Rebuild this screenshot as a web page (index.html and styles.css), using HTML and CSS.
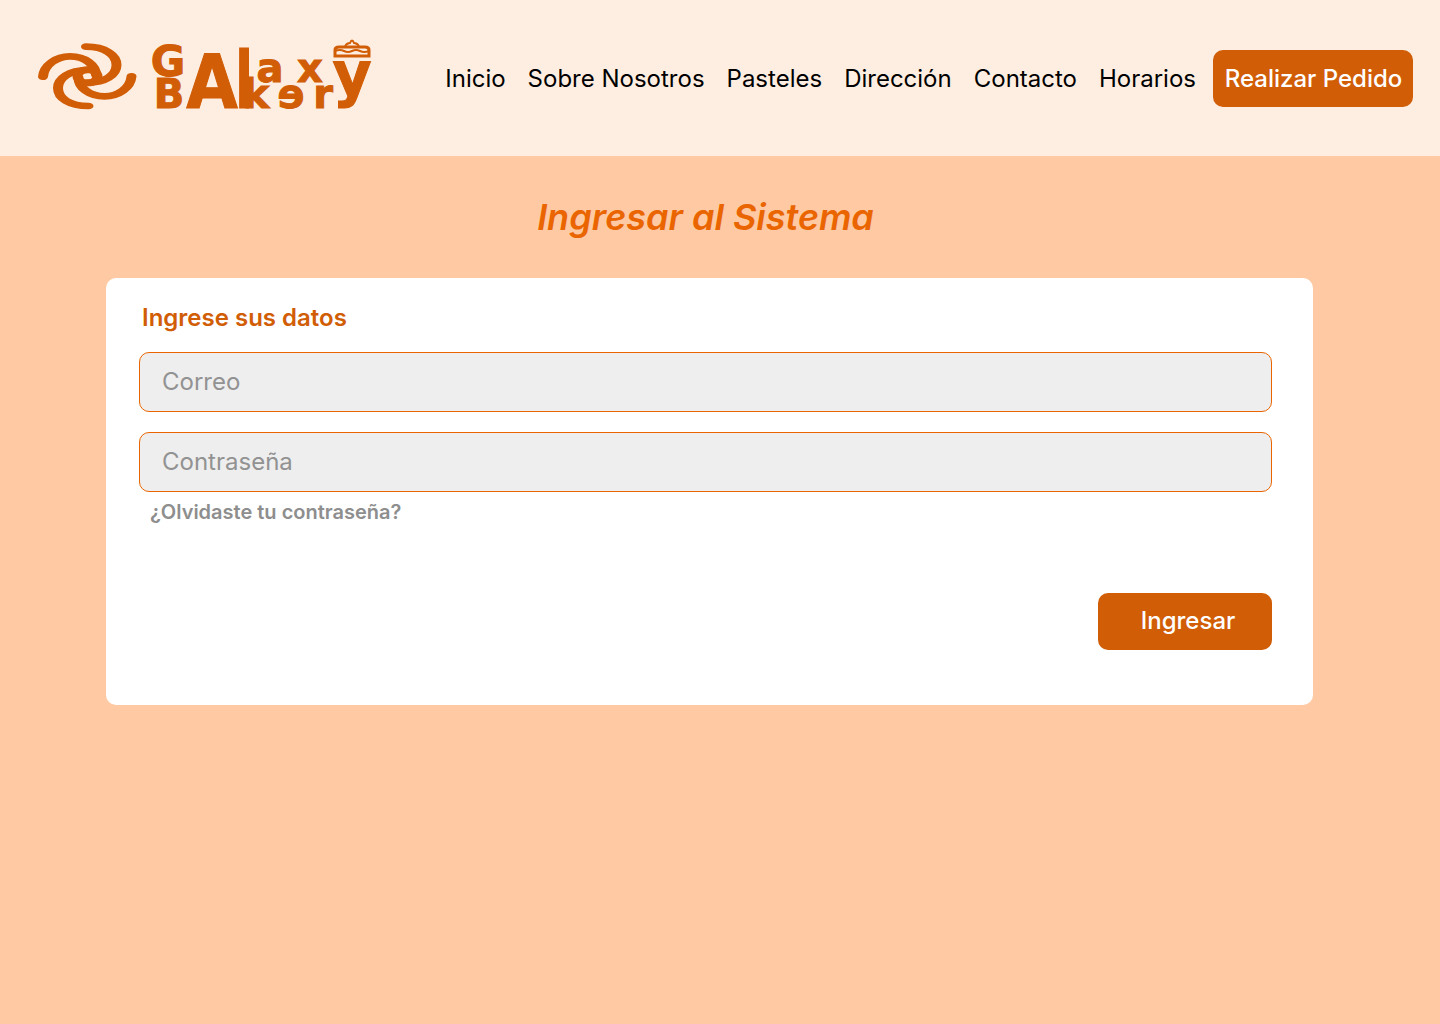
FILE: index.html
```html
<!DOCTYPE html>
<html lang="es">
<head>
<meta charset="utf-8">
<meta name="viewport" content="width=device-width, initial-scale=1">
<title>Galaxy Bakery</title>
<link rel="stylesheet" href="styles.css">
</head>
<body>
<header class="header">
  <a class="logo" href="#" aria-label="Galaxy Bakery">
    <svg class="logo-art" viewBox="0 0 336 74" aria-hidden="true">
      <g class="swirl" transform="translate(-7 -11) scale(.5 .3333)">
        <path d="M26 140C28 105 53 79 80 79C110 79 132 105 132 135"/>
        <path d="M112 50C150 50 173 75 173 105C173 135 150 158 115 158"/>
        <path d="M203 139C201 174 176 199 149 199C119 199 97 173 97 143"/>
        <path d="M117 228C79 228 56 205 56 174C56 145 79 120 115 120"/>
        <ellipse cx="115" cy="139" rx="20" ry="20"/>
      </g>
      <g class="wordmark">
        <text class="cap" x="131" y="35">G</text>
        <text class="low" x="132" y="67">B</text>
        <text class="tall" x="175" y="67">A</text>
        <text class="stem" x="207" y="67">l</text>
        <text class="low" x="233" y="41">a</text>
        <text class="low" x="273" y="41">x</text>
        <text class="low" x="219" y="67">k</text>
        <text class="low" x="254" y="67">ɘ</text>
        <text class="low" x="286" y="67">r</text>
        <text class="wye" x="315" y="54">y</text>
      </g>
      <g class="cake">
        <path d="M298 15V9Q298 6 302 6H328Q332 6 332 9V15Z"/>
        <path class="icing" d="M298 10Q303 8 307 10T315 10T323 10T332 10M308 5Q310 2 313 2Q315 -3 317 2Q320 2 322 5"/>
      </g>
    </svg>
  </a>
  <nav class="nav">
    <a href="#">Inicio</a>
    <a href="#">Sobre Nosotros</a>
    <a href="#">Pasteles</a>
    <a href="#">Dirección</a>
    <a href="#">Contacto</a>
    <a href="#">Horarios</a>
  </nav>
  <button class="button order" type="button">Realizar Pedido</button>
</header>
<main class="main">
  <h1 class="title">Ingresar al Sistema</h1>
  <form class="card">
    <h2 class="subtitle">Ingrese sus datos</h2>
    <input class="field" type="email" placeholder="Correo" aria-label="Correo">
    <input class="field" type="password" placeholder="Contraseña" aria-label="Contraseña">
    <a class="forgot" href="#">¿Olvidaste tu contraseña?</a>
    <button class="button submit" type="button">Ingresar</button>
  </form>
</main>
</body>
</html>
```
FILE: styles.css
```css
* { box-sizing: border-box; }
body {
  margin: 0;
  min-height: 100vh;
  background: #fec9a3;
  font-family: Inter, "Liberation Sans", sans-serif;
  font-size: 24px;
  line-height: 30px;
  color: #000;
}
a { color: inherit; text-decoration: none; }
.header {
  display: flex;
  align-items: center;
  padding: 36px 27px 36px 37px;
  min-height: 156px;
  background: #feeee1;
}
.logo { display: block; width: 336px; }
.logo-art { display: block; width: 100%; overflow: visible; }
.swirl { fill: none; stroke: #d15d06; stroke-width: 20; stroke-linecap: round; }
.wordmark {
  fill: #d15d06;
  stroke: #d15d06;
  font-family: "DejaVu Sans", sans-serif;
  font-weight: 700;
  text-anchor: middle;
}
.cap { font-size: 42px; }
.low { font-size: 40px; }
.wye { font-size: 60px; }
.tall { font-family: "DejaVu Sans Condensed", "DejaVu Sans", sans-serif; font-size: 74px; }
.stem { font-family: Inter, sans-serif; font-size: 82px; font-weight: 500; }
.cake { fill: none; stroke: #d15d06; stroke-width: 3; }
.icing { stroke-width: 2; }
.nav {
  display: flex;
  gap: 22px;
  margin-left: auto;
  margin-right: 17px;
  padding-top: 2px;
  white-space: nowrap;
}
.button {
  height: 57px;
  border: 0;
  border-radius: 10px;
  background: #d15d06;
  color: #fff;
  font: 500 24px/30px Inter, "Liberation Sans", sans-serif;
  cursor: pointer;
}
.order { width: 200px; padding: 2px 0 0 1px; white-space: nowrap; }
.main { padding: 38px 127px 40px 106px; }
.title {
  margin: 0 0 38px;
  padding-right: 8px;
  text-align: center;
  font-size: 36px;
  line-height: 46px;
  font-weight: 600;
  font-style: italic;
  color: #ea6500;
}
.card {
  display: flex;
  flex-direction: column;
  padding: 25px 41px 55px 33px;
  border-radius: 10px;
  background: #fff;
}
.subtitle {
  margin: 0 0 19px 3px;
  font-size: 24px;
  line-height: 30px;
  font-weight: 600;
  color: #d15d06;
}
.field {
  width: 100%;
  height: 60px;
  padding: 0 22px 2px;
  border: 1px solid #ea6500;
  border-radius: 10px;
  background: #eee;
  font: 400 24px/30px Inter, "Liberation Sans", sans-serif;
}
.field + .field { margin-top: 20px; }
.field::placeholder { color: #929292; opacity: 1; }
.forgot {
  align-self: flex-start;
  margin: 8px 0 0 11px;
  font-size: 20px;
  line-height: 24px;
  font-weight: 600;
  color: #8e8e8e;
}
.submit { align-self: flex-end; width: 174px; margin-top: 69px; padding: 0 0 2px 6px; }
```
